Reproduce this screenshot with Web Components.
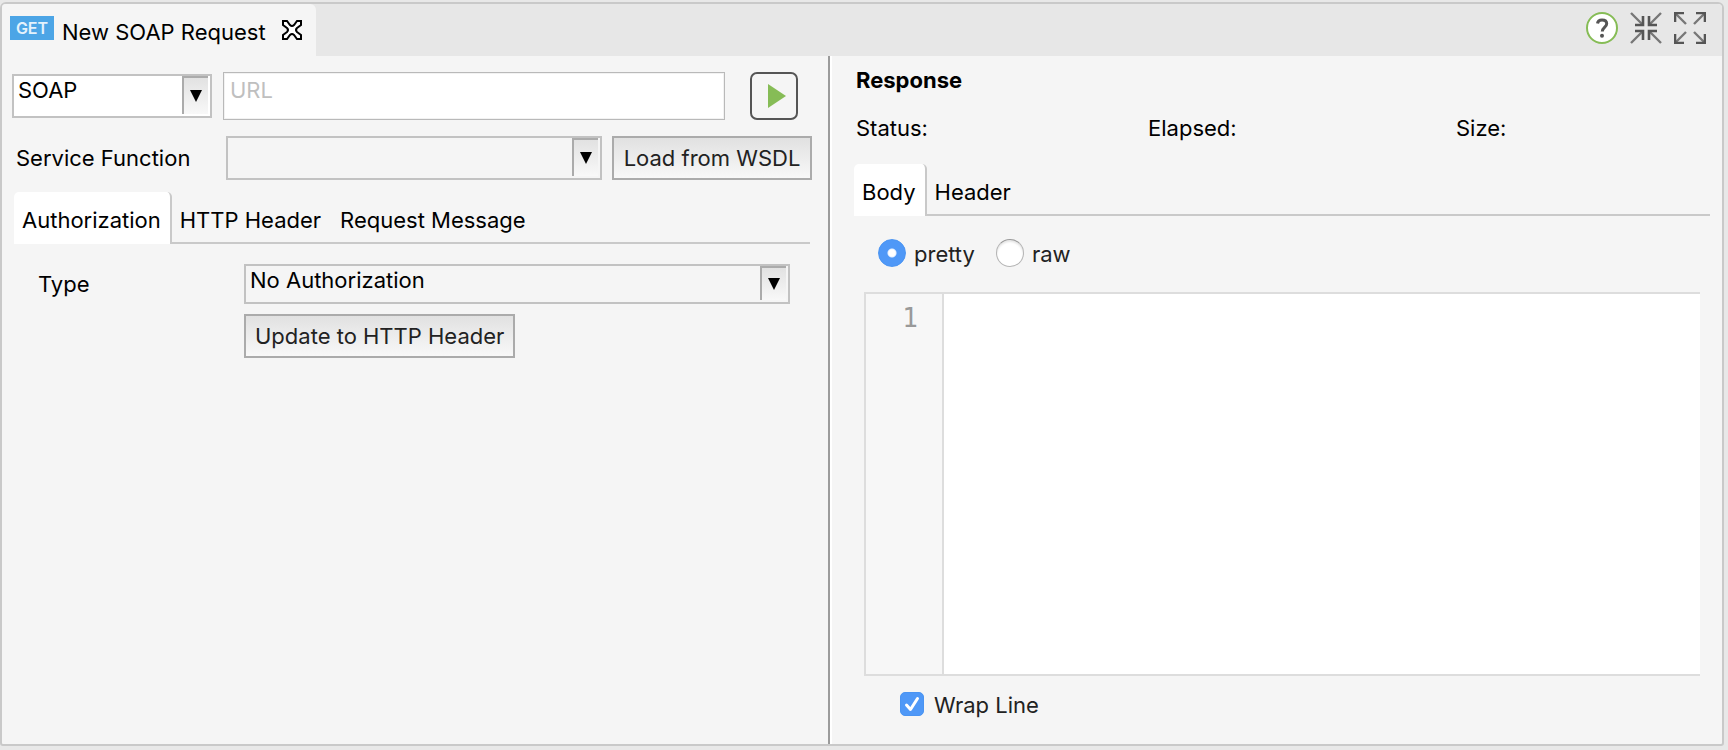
<!DOCTYPE html>
<html lang="en">
<head>
<meta charset="utf-8">
<title>New SOAP Request</title>
<style>
  html, body { height: 100%; }
  body {
    margin: 0;
    background: #e8e8e8;
    color: #000;
    font: 22px/28px Inter, "Liberation Sans", sans-serif;
  }
</style>
</head>
<body>
<request-editor></request-editor>

<template id="request-editor">
  <style>
    :host { display: block; box-sizing: border-box; height: 100%; padding: 2px 4px 4px 0; }
    * { box-sizing: border-box; }
    .frame {
      display: flex; flex-direction: column; height: 100%;
      border: 2px solid #c9c9c9; border-radius: 6px 6px 3px 3px; background: #f5f5f5; overflow: hidden;
    }
    .panes { flex: 1; min-height: 0; display: grid; grid-template-columns: 826fr 4px 890fr; }
    .splitter { background: linear-gradient(to right, #9b9b9b 50%, #fff 50%); }
  </style>
  <div class="frame">
    <editor-bar>New SOAP Request</editor-bar>
    <div class="panes">
      <request-pane></request-pane>
      <div class="splitter" role="separator" aria-orientation="vertical"></div>
      <response-pane></response-pane>
    </div>
  </div>
</template>

<template id="editor-bar">
  <style>
    :host { display: flex; justify-content: space-between; height: 52px; background: #e7e7e7; }
    button { padding: 0; border: 0; background: none; display: block; }
    svg { display: block; }
    .tab {
      display: flex; align-items: center; padding: 0 13px 0 8px;
      background: #f5f5f5; border-radius: 0 6px 0 0; height: 52px;
    }
    .badge {
      width: 44px; height: 24px; margin: 0 8px 4px 0; background: #4ca5e6; color: #e4f2fc;
      font-size: 16px; font-weight: 600; line-height: 24px; text-align: center;
    }
    .title { padding-top: 4px; }
    .close { margin: 0 0 0 15px; }
    .actions { display: flex; align-items: center; gap: 12px; padding: 0 16px 4px 0; }
  </style>
  <div class="tab">
    <span class="badge">GET</span>
    <span class="title"><slot></slot></span>
    <button class="close" aria-label="Close">
      <svg width="22" height="22" viewBox="0 0 22 22" fill="#fff" stroke="#000" stroke-width="2" stroke-linejoin="miter">
        <path d="M2 2H6L9 6Q11 8 13 6L16 2H20V6L16 9Q14 11 16 13L20 16V20H16L13 16Q11 14 9 16L6 20H2V16L6 13Q8 11 6 9L2 6Z"/>
      </svg>
    </button>
  </div>
  <div class="actions">
    <button aria-label="Help">
      <svg width="32" height="32" viewBox="0 0 32 32" fill="none">
        <circle cx="16" cy="16" r="15" fill="#fff" stroke="#86bc56" stroke-width="2"/>
        <path d="M11.5 11.5C11.8 9 13.5 8 16 8C18.8 8 20.7 9.4 20.7 11.8C20.7 15 16.3 15.2 16.3 19.5" stroke="#555" stroke-width="3"/>
        <circle cx="16" cy="23.8" r="2" fill="#555"/>
      </svg>
    </button>
    <button aria-label="Minimize">
      <svg width="32" height="32" viewBox="0 0 32 32" fill="none" stroke="#555">
        <path stroke="#777" stroke-width="2.4" d="M1 1L12 12M31 1L20 12M1 31L12 20M31 31L20 20"/>
        <path stroke-width="2.6" d="M5 13H13V4M27 13H19V4M5 19H13V28M27 19H19V28"/>
      </svg>
    </button>
    <button aria-label="Maximize">
      <svg width="32" height="32" viewBox="0 0 32 32" fill="none" stroke="#555">
        <path stroke="#777" stroke-width="2.4" d="M2 2L12 12M30 2L20 12M2 30L12 20M30 30L20 20"/>
        <path stroke-width="2.6" d="M1 10V1H10M22 1H31V10M1 22V31H10M22 31H31V22"/>
      </svg>
    </button>
  </div>
</template>

<template id="request-pane">
  <style>
    :host { display: block; padding: 16px 16px 0 10px; }
    * { box-sizing: border-box; }
    .address { display: flex; align-items: center; }
    .address pick-list { width: 200px; margin-right: 11px; --field-bg: #fff; --field-lift: 14px; }
    input {
      flex: 1; min-width: 0; height: 48px; margin: 0; padding: 0 6px 13px; border: 1px solid #b9b9b9;
      border-radius: 0; background: #fff; color: #000; font: inherit; box-shadow: inset 0 0 0 1px #f2f2f2;
    }
    input::placeholder { color: #bfbfbf; opacity: 1; }
    .send {
      width: 48px; height: 48px; margin: 0 14px 0 25px; padding: 0 0 0 6px; border: 2px solid #555;
      border-radius: 7px; background: #f5f5f5; display: grid; place-items: center;
    }
    .service { display: flex; gap: 10px; margin-top: 16px; }
    .service pick-list { flex: 1; padding-left: 4px; --label-width: 210px; }
    .service push-button { width: 200px; }
    tab-strip { margin: 12px 2px 0 2px; }
    .auth { padding: 20px 22px 0 26px; display: grid; gap: 10px; }
    .auth pick-list { --label-width: 206px; --field-height: 40px; --field-lift: 8px; }
    .auth push-button { margin-left: 206px; justify-self: start; }
  </style>
  <div class="address">
    <pick-list name="Protocol" options="SOAP,GET,POST,PUT,DELETE"></pick-list>
    <input type="text" placeholder="URL" aria-label="URL">
    <button class="send" aria-label="Send request">
      <svg width="18" height="24" viewBox="0 0 18 24"><path fill="#86bc56" d="M0 0L18 12L0 24Z"/></svg>
    </button>
  </div>
  <div class="service">
    <pick-list label="Service Function" options=""></pick-list>
    <push-button>Load from WSDL</push-button>
  </div>
  <tab-strip tabs="Authorization,HTTP Header,Request Message"></tab-strip>
  <div class="auth">
    <pick-list label="Type" options="No Authorization,Basic"></pick-list>
    <push-button>Update to HTTP Header</push-button>
  </div>
</template>

<template id="response-pane">
  <style>
    :host { display: flex; flex-direction: column; min-height: 0; padding: 10px 12px 26px 22px; }
    * { box-sizing: border-box; }
    h2 { margin: 0 0 20px 2px; font-size: 22px; font-weight: 700; line-height: 28px; }
    .stats { display: grid; grid-template-columns: 292fr 308fr 254fr; padding-left: 2px; }
    tab-strip { margin-top: 22px; }
    .view { display: flex; gap: 21px; padding: 23px 0 0 24px; }
    code-area { flex: 1; min-height: 0; margin: 25px 10px 0 10px; }
    .wrap { margin: 14px 0 0 46px; }
  </style>
  <h2>Response</h2>
  <div class="stats"><span>Status:</span><span>Elapsed:</span><span>Size:</span></div>
  <tab-strip tabs="Body,Header"></tab-strip>
  <div class="view" role="radiogroup" aria-label="Body format">
    <choice-box type="radio" checked>pretty</choice-box>
    <choice-box type="radio">raw</choice-box>
  </div>
  <code-area></code-area>
  <choice-box class="wrap" type="checkbox" checked>Wrap Line</choice-box>
</template>

<template id="pick-list">
  <style>
    :host { display: flex; align-items: center; box-sizing: border-box; min-width: 0; }
    * { box-sizing: border-box; }
    label { flex: none; width: var(--label-width, 0px); }
    label[hidden] { display: none; }
    .field { position: relative; flex: 1; min-width: 0; height: var(--field-height, 44px); display: flex; }
    select {
      appearance: none; width: 100%; height: 100%; margin: 0; border: 2px solid #c2c2c2; border-radius: 0;
      padding: 0 32px var(--field-lift, 0px) 4px; background: var(--field-bg, #f5f5f5); color: #000; font: inherit;
    }
    .arrow {
      position: absolute; top: 2px; right: 4px; bottom: 4px; width: 26px; pointer-events: none;
      border-left: 2px solid #ababab; border-top: 2px solid #ababab;
      background: linear-gradient(#e2e2e2, #f8f8f8); display: grid; place-items: center;
    }
  </style>
  <label for="field"></label>
  <div class="field">
    <select id="field"></select>
    <span class="arrow"><svg width="12" height="12" viewBox="0 0 12 12"><path d="M0 0H12L6 12Z"/></svg></span>
  </div>
</template>

<template id="push-button">
  <style>
    :host { display: block; }
    button {
      box-sizing: border-box; width: 100%; height: 44px; margin: 0; padding: 0 9px; border: 2px solid #ababab;
      border-radius: 0; background: linear-gradient(#e1e1e1, #f8f8f8); color: #222; font: inherit; white-space: nowrap;
    }
  </style>
  <button type="button"><slot></slot></button>
</template>

<template id="tab-strip">
  <style>
    :host { display: flex; height: 52px; }
    button {
      box-sizing: border-box; margin: 0; padding: 6px 10px 0 9px; border: 0; border-bottom: 2px solid #c9c9c9;
      background: none; color: #000; font: inherit; white-space: nowrap;
    }
    button[aria-selected="true"] {
      padding: 4px 9px 0 8px; border-bottom: 0; border-right: 2px solid #c9c9c9;
      border-radius: 5px 5px 0 0; background: #fff;
    }
    button[aria-selected="true"] + button { padding-left: 8px; }
    .rest { flex: 1; border-bottom: 2px solid #c9c9c9; }
  </style>
</template>

<template id="choice-box">
  <style>
    :host { display: block; }
    label { display: flex; align-items: center; color: #222; height: 28px; }
    input { appearance: none; box-sizing: border-box; margin: 0; flex: none; }
    input[type="radio"] {
      width: 28px; height: 28px; margin-right: 8px; border: 1px solid #b5b5b5; border-top-color: #999;
      border-radius: 50%; background: #fff; box-shadow: inset 0 2px 2px #e6e6e6;
    }
    input[type="radio"]:checked {
      border-color: #4a94f2; box-shadow: none;
      background: radial-gradient(circle, #fff 0 3px, #e6f0fe 4px, #4f98f7 5px);
    }
    input[type="checkbox"] { width: 24px; height: 24px; margin-right: 10px; border-radius: 5px; background: #fff; border: 1px solid #b5b5b5; }
    input[type="checkbox"]:checked { background: #4f98f7; border-color: #4a94f2; }
    .box { position: relative; display: flex; }
    .box svg { position: absolute; top: 0; left: 0; pointer-events: none; display: none; }
    input[type="checkbox"]:checked + svg { display: block; }
    .text { padding-top: 2px; }
  </style>
  <label>
    <span class="box">
      <input>
      <svg width="24" height="24" viewBox="0 0 24 24" fill="none" stroke="#fff" stroke-width="3" stroke-linecap="round" stroke-linejoin="round"><path d="M6.5 13L10.5 17.5L17.5 6.5"/></svg>
    </span>
    <span class="text"><slot></slot></span>
  </label>
</template>

<template id="code-area">
  <style>
    :host { display: flex; border: 2px solid #ddd; border-right: 0; background: #fff; }
    .gutter {
      box-sizing: border-box; width: 78px; padding: 8px 24px 0 0; border-right: 2px solid #ddd;
      background: #f7f7f7; color: #999; text-align: right; font: 26px/32px "DejaVu Sans Mono", monospace;
    }
    textarea {
      flex: 1; min-width: 0; margin: 0; padding: 8px; border: 0; outline: 0; resize: none; background: #fff;
      font: 26px/32px "DejaVu Sans Mono", monospace;
    }
  </style>
  <div class="gutter">1</div>
  <textarea aria-label="Response body" readonly></textarea>
</template>

<script>
  class BaseElement extends HTMLElement {
    constructor() {
      super();
      this.attachShadow({ mode: "open" })
        .append(document.getElementById(this.localName).content.cloneNode(true));
    }
    list(name) {
      return (this.getAttribute(name) || "").split(",");
    }
  }

  class RequestEditor extends BaseElement {}
  class EditorBar extends BaseElement {}
  class RequestPane extends BaseElement {}
  class ResponsePane extends BaseElement {
    connectedCallback() {
      const radios = [...this.shadowRoot.querySelectorAll('choice-box[type="radio"]')];
      for (const radio of radios) {
        radio.addEventListener("change-choice", () => {
          for (const other of radios) other.input.checked = other === radio;
        });
      }
    }
  }
  class PushButton extends BaseElement {}
  class CodeArea extends BaseElement {}

  class PickList extends BaseElement {
    connectedCallback() {
      const label = this.shadowRoot.querySelector("label");
      const select = this.shadowRoot.querySelector("select");
      label.textContent = this.getAttribute("label") || "";
      label.hidden = !this.hasAttribute("label");
      if (this.hasAttribute("name")) select.setAttribute("aria-label", this.getAttribute("name"));
      select.replaceChildren(...this.list("options").map((text) => new Option(text)));
    }
  }

  class TabStrip extends BaseElement {
    connectedCallback() {
      this.setAttribute("role", "tablist");
      const tabs = this.list("tabs").map((text, index) => {
        const tab = document.createElement("button");
        tab.type = "button";
        tab.textContent = text;
        tab.setAttribute("role", "tab");
        tab.setAttribute("aria-selected", index === 0);
        tab.addEventListener("click", () => {
          for (const other of tabs) other.setAttribute("aria-selected", other === tab);
        });
        return tab;
      });
      const rest = document.createElement("span");
      rest.className = "rest";
      this.shadowRoot.append(...tabs, rest);
    }
  }

  class ChoiceBox extends BaseElement {
    connectedCallback() {
      this.input = this.shadowRoot.querySelector("input");
      this.input.type = this.getAttribute("type");
      this.input.checked = this.hasAttribute("checked");
      this.input.addEventListener("change", () => this.dispatchEvent(new Event("change-choice")));
    }
  }

  customElements.define("choice-box", ChoiceBox);
  customElements.define("push-button", PushButton);
  customElements.define("pick-list", PickList);
  customElements.define("tab-strip", TabStrip);
  customElements.define("code-area", CodeArea);
  customElements.define("editor-bar", EditorBar);
  customElements.define("request-pane", RequestPane);
  customElements.define("response-pane", ResponsePane);
  customElements.define("request-editor", RequestEditor);
</script>
</body>
</html>
